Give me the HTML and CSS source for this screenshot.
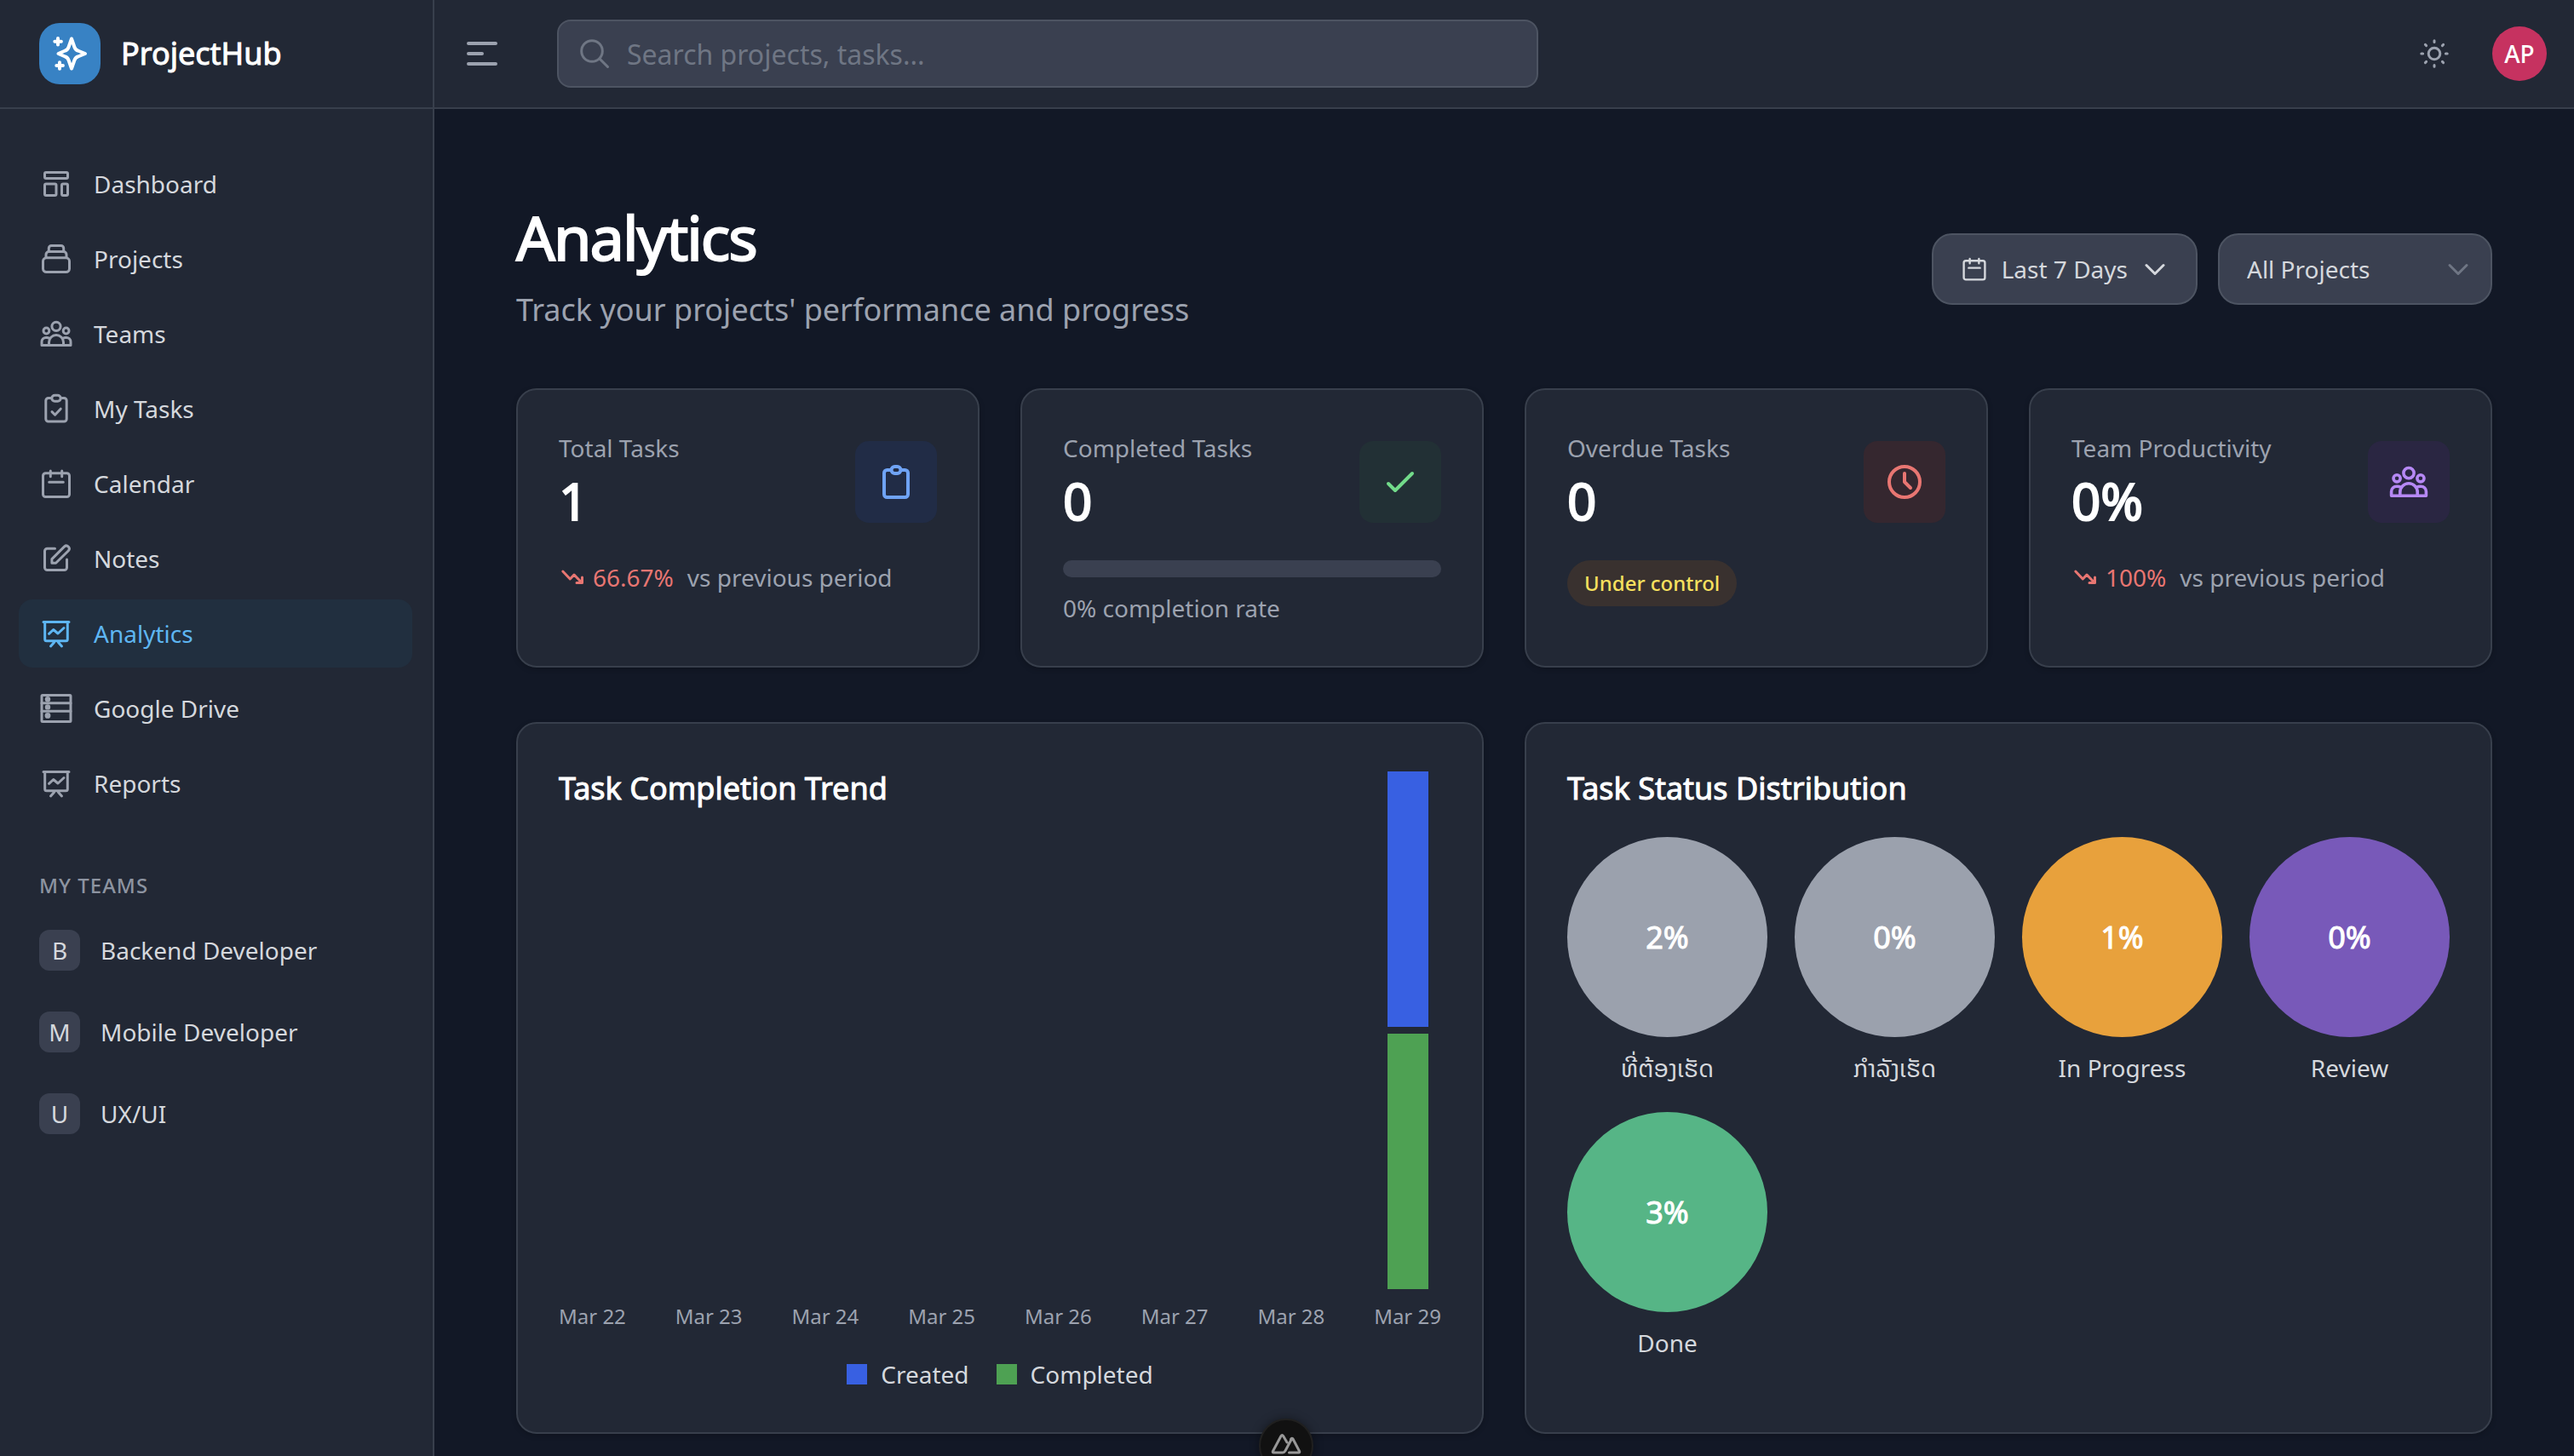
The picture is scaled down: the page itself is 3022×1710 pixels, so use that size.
FILE: index.html
```html
<!DOCTYPE html>
<html lang="en">
<head>
<meta charset="utf-8">
<meta name="viewport" content="width=device-width, initial-scale=1">
<title>ProjectHub - Analytics</title>
<link rel="stylesheet" href="styles.css">
</head>
<body>
<svg class="sprite" aria-hidden="true">
  <symbol id="i-dashboard" viewBox="0 0 40 40"><rect x="6.500" y="6.500" width="27" height="7" rx="1.500"/><rect x="6.500" y="20" width="13.500" height="13.500" rx="1.500"/><rect x="26.500" y="20" width="7" height="13.500" rx="1.500"/></symbol>
  <symbol id="i-projects" viewBox="0 0 40 40"><path d="M11.300 11V7.500a3 3 0 0 1 3-3h11.400a3 3 0 0 1 3 3V11M8 18v-3a3.500 3.500 0 0 1 3.500-3.500h17A3.500 3.500 0 0 1 32 15v3"/><rect x="4.500" y="18.800" width="31" height="16.700" rx="4"/></symbol>
  <symbol id="i-teams" viewBox="0 0 40 40"><circle cx="20" cy="11.300" r="5.100"/><circle cx="8.400" cy="16.500" r="3.400"/><circle cx="31.600" cy="16.500" r="3.400"/><path d="M11.500 33.500V30a8.500 8.500 0 0 1 17 0v3.500M12 25.300a6 6 0 0 0-3-.9H8a5 5 0 0 0-5 5v4.100h34v-4.100a5 5 0 0 0-5-5h-1a6 6 0 0 0-3 .9"/></symbol>
  <symbol id="i-tasks" viewBox="0 0 40 40"><path d="M14 7.500h-3.200a3 3 0 0 0-3 3v21.600a3 3 0 0 0 3 3h18.400a3 3 0 0 0 3-3V10.500a3 3 0 0 0-3-3H26M15 23.600l3.600 3.600 6.600-7"/><rect x="14.800" y="4.300" width="10.400" height="7" rx="3.500"/></symbol>
  <symbol id="i-calendar" viewBox="0 0 40 40"><rect x="4.500" y="7.800" width="31" height="27.700" rx="3"/><path d="M13.300 5v6.700M26.700 5v6.700M11.700 18.300h16.600"/></symbol>
  <symbol id="i-notes" viewBox="0 0 40 40"><path d="M18.500 8.200h-9a3 3 0 0 0-3 3v19.300a3 3 0 0 0 3 3h20a3 3 0 0 0 3-3V21M14.900 25.300v-4.700L29.600 5.900a3.400 3.400 0 0 1 4.800 4.800L19.600 25.300z"/></symbol>
  <symbol id="i-board" viewBox="0 0 40 40"><path d="M5 6.400h30M6.700 6.400v20.300a2 2 0 0 0 2 2h22.600a2 2 0 0 0 2-2V6.400M17.500 30.500L13.500 35M22.500 30.500l4 4.500M11.500 20.300l5.200-4.800 5.300 4.500 7-6.500"/></symbol>
  <symbol id="i-drive" viewBox="0 0 40 40"><rect x="3" y="4.500" width="34" height="31" rx="1"/><path d="M3 13.700h34M3 23.300h34"/><g fill="currentColor" stroke="none"><circle cx="10" cy="9.200" r="3.200"/><circle cx="10" cy="18.400" r="3.200"/><circle cx="10" cy="28.400" r="3.400"/></g></symbol>
  <symbol id="i-trend" viewBox="0 0 32 32"><path d="M4.800 9l8.500 9 4.700-5 9 9.300M27.500 16v6.500H21"/></symbol>
  <symbol id="i-chevron" viewBox="0 0 32 32"><path d="M6 11.500l10 10 10-10"/></symbol>
</svg>

<div class="app">
  <aside class="sidebar">
    <div class="brand">
      <svg class="brand-mark" viewBox="0 0 72 72" aria-hidden="true"><path d="M38 18.500L41.500 28.500Q42.500 31.500 45.500 32.500L54 36L45.500 39.500Q42.500 40.500 41.500 43.500L38 53.500L34.500 43.500Q33.500 40.500 30.500 39.500L22.500 36L30.500 32.500Q33.500 31.500 34.500 28.500ZM22 18v7.600M18.300 21.800h7.600M24 46.200v7.600M20.300 50h7.600"/></svg>
      <span class="brand-name">ProjectHub</span>
    </div>
    <nav class="nav" aria-label="Main">
      <a class="nav-item" href="#"><svg class="icon"><use href="#i-dashboard"/></svg>Dashboard</a>
      <a class="nav-item" href="#"><svg class="icon"><use href="#i-projects"/></svg>Projects</a>
      <a class="nav-item" href="#"><svg class="icon"><use href="#i-teams"/></svg>Teams</a>
      <a class="nav-item" href="#"><svg class="icon"><use href="#i-tasks"/></svg>My Tasks</a>
      <a class="nav-item" href="#"><svg class="icon"><use href="#i-calendar"/></svg>Calendar</a>
      <a class="nav-item" href="#"><svg class="icon"><use href="#i-notes"/></svg>Notes</a>
      <a class="nav-item active" href="#" aria-current="page"><svg class="icon"><use href="#i-board"/></svg>Analytics</a>
      <a class="nav-item" href="#"><svg class="icon"><use href="#i-drive"/></svg>Google Drive</a>
      <a class="nav-item" href="#"><svg class="icon"><use href="#i-board"/></svg>Reports</a>
    </nav>
    <section class="teams">
      <h2 class="teams-title">MY TEAMS</h2>
      <a class="team" href="#"><span class="team-tile">B</span>Backend Developer</a>
      <a class="team" href="#"><span class="team-tile">M</span>Mobile Developer</a>
      <a class="team" href="#"><span class="team-tile">U</span>UX/UI</a>
    </section>
  </aside>

  <div class="page">
    <header class="topbar">
      <button class="icon-button" type="button" aria-label="Toggle menu"><svg class="icon menu-icon" viewBox="0 0 40 40"><path d="M4 8h32M4 20h16M4 32h32"/></svg></button>
      <label class="search">
        <svg class="search-icon" viewBox="0 0 40 40" aria-hidden="true"><circle cx="17" cy="17" r="12.300"/><path d="M26 26l9.500 9.500"/></svg>
        <input type="search" placeholder="Search projects, tasks..." aria-label="Search projects and tasks">
      </label>
      <div class="topbar-actions">
        <button class="icon-button" type="button" aria-label="Toggle theme"><svg class="icon" viewBox="0 0 40 40"><circle cx="20" cy="20" r="6.800"/><path d="M20 4.800v1.800M20 33.400v1.800M4.800 20h1.800M33.400 20h1.800M9.400 9.400l1.200 1.200M29.400 29.400l1.200 1.200M9.400 30.600l1.200-1.200M29.400 10.600l1.200-1.200"/></svg></button>
        <button class="avatar" type="button" aria-label="Account AP">AP</button>
      </div>
    </header>

    <main class="content">
      <div class="page-head">
        <div>
          <h1 class="page-title">Analytics</h1>
          <p class="page-subtitle">Track your projects' performance and progress</p>
        </div>
        <div class="filters">
          <button class="period" type="button"><svg class="icon-sm"><use href="#i-calendar"/></svg>Last 7 Days<svg class="icon-sm"><use href="#i-chevron"/></svg></button>
          <div class="select">
            <select aria-label="Project"><option>All Projects</option></select>
            <svg class="select-arrow" aria-hidden="true"><use href="#i-chevron"/></svg>
          </div>
        </div>
      </div>

      <div class="stats">
        <section class="card">
          <div class="stat-head">
            <div><h2 class="stat-label">Total Tasks</h2><p class="stat-value">1</p></div>
            <span class="stat-icon blue"><svg viewBox="0 0 48 48"><path d="M17 10h-3.500a3.500 3.500 0 0 0-3.500 3.500v25a3.500 3.500 0 0 0 3.500 3.500h21a3.500 3.500 0 0 0 3.500-3.500v-25a3.500 3.500 0 0 0-3.500-3.500H31"/><rect x="18.500" y="6" width="11" height="8" rx="4"/></svg></span>
          </div>
          <p class="trend"><span class="down"><svg class="icon-sm"><use href="#i-trend"/></svg>66.67%</span>vs previous period</p>
        </section>
        <section class="card">
          <div class="stat-head">
            <div><h2 class="stat-label">Completed Tasks</h2><p class="stat-value">0</p></div>
            <span class="stat-icon green"><svg viewBox="0 0 48 48"><path d="M10 26l8 8 20-20"/></svg></span>
          </div>
          <div class="progress" role="progressbar" aria-valuenow="0" aria-valuemin="0" aria-valuemax="100" aria-label="Completion rate"></div>
          <p class="rate">0% completion rate</p>
        </section>
        <section class="card">
          <div class="stat-head">
            <div><h2 class="stat-label">Overdue Tasks</h2><p class="stat-value">0</p></div>
            <span class="stat-icon red"><svg viewBox="0 0 48 48"><circle cx="24" cy="24" r="18"/><path d="M24 14v10l7 7"/></svg></span>
          </div>
          <span class="badge">Under control</span>
        </section>
        <section class="card">
          <div class="stat-head">
            <div><h2 class="stat-label">Team Productivity</h2><p class="stat-value">0%</p></div>
            <span class="stat-icon purple"><svg><use href="#i-teams"/></svg></span>
          </div>
          <p class="trend"><span class="down"><svg class="icon-sm"><use href="#i-trend"/></svg>100%</span>vs previous period</p>
        </section>
      </div>

      <div class="charts">
        <section class="card">
          <h2 class="card-title">Task Completion Trend</h2>
          <div class="bars">
            <div class="day"><span class="day-label">Mar 22</span></div>
            <div class="day"><span class="day-label">Mar 23</span></div>
            <div class="day"><span class="day-label">Mar 24</span></div>
            <div class="day"><span class="day-label">Mar 25</span></div>
            <div class="day"><span class="day-label">Mar 26</span></div>
            <div class="day"><span class="day-label">Mar 27</span></div>
            <div class="day"><span class="day-label">Mar 28</span></div>
            <div class="day"><div class="bar created" style="height:300px"></div><div class="bar completed" style="height:300px"></div><span class="day-label">Mar 29</span></div>
          </div>
          <div class="legend">
            <span class="legend-item"><i class="swatch created"></i>Created</span>
            <span class="legend-item"><i class="swatch completed"></i>Completed</span>
          </div>
        </section>
        <section class="card">
          <h2 class="card-title">Task Status Distribution</h2>
          <div class="statuses">
            <div class="status"><div class="disc gray">2%</div><span lang="lo">ທີ່ຕ້ອງເຮັດ</span></div>
            <div class="status"><div class="disc gray">0%</div><span lang="lo">ກຳລັງເຮັດ</span></div>
            <div class="status"><div class="disc amber">1%</div><span>In Progress</span></div>
            <div class="status"><div class="disc violet">0%</div><span>Review</span></div>
            <div class="status"><div class="disc emerald">3%</div><span>Done</span></div>
          </div>
        </section>
      </div>
    </main>
  </div>
</div>

<button class="devtools" type="button" aria-label="Nuxt DevTools"><svg viewBox="0 0 40 40"><path d="M26.700 11.500L18.800 26.200Q17.900 28 16 28H5.500Q3.500 28 4.500 26.200L14 8.500Q15.300 6.500 16.600 8.500L21 16M23.500 28H34.500Q36.500 28 35.500 26.200L28 12Q26.700 10.300 25.500 12.200"/></svg></button>
</body>
</html>
```
FILE: styles.css
```css
:root {
  --bg: #121826;
  --panel: #222835;
  --field: #3a4050;
  --line: #383f4c;
  --field-line: #4d5462;
  --text: #d5d8dd;
  --muted: #9ca2af;
  --faint: #6f7684;
}

* { box-sizing: border-box; }

body {
  margin: 0;
  background: var(--bg);
  color: var(--text);
  font: 28px/40px "Noto Sans", "Noto Sans Lao", "DejaVu Sans", sans-serif;
}

h1, h2, p { margin: 0; font-weight: 400; }
a { color: inherit; text-decoration: none; }
button, input, select { font: inherit; color: inherit; margin: 0; }
button { cursor: pointer; }

svg {
  display: block;
  flex: none;
  fill: none;
  stroke: currentColor;
  stroke-width: 3;
  stroke-linecap: round;
  stroke-linejoin: round;
}

.sprite { position: absolute; width: 0; height: 0; }
.icon { width: 40px; height: 40px; }
.icon-sm { width: 32px; height: 32px; }

.app { display: flex; min-height: 100vh; }

/* Sidebar */
.sidebar {
  flex: none;
  width: 510px;
  background: var(--panel);
  border-right: 2px solid var(--line);
}

.brand {
  display: flex;
  align-items: center;
  gap: 24px;
  height: 128px;
  padding: 0 46px;
  border-bottom: 2px solid var(--line);
}

.brand-mark {
  width: 72px;
  height: 72px;
  border-radius: 24px;
  background: #3882c4;
  color: #fff;
  stroke-width: 4;
}

.brand-name {
  color: #fff;
  font-size: 36px;
  -webkit-text-stroke: 1px;
}

.nav {
  display: flex;
  flex-direction: column;
  gap: 8px;
  padding: 48px 24px 0 22px;
}

.nav-item {
  display: flex;
  align-items: center;
  gap: 24px;
  height: 80px;
  padding: 0 24px;
  border-radius: 16px;
}

.nav-item .icon { color: var(--muted); }
.nav-item.active { background: #212f3f; color: #5eb6f2; }
.nav-item.active .icon { color: inherit; }

.teams {
  display: flex;
  flex-direction: column;
  gap: 16px;
  padding: 64px 46px;
}

.teams-title {
  color: #8d94a1;
  font-size: 24px;
  line-height: 32px;
  font-weight: 500;
  letter-spacing: 1px;
  margin-bottom: 4px;
}

.team { display: flex; align-items: center; gap: 24px; height: 80px; }

.team-tile {
  display: grid;
  place-items: center;
  width: 48px;
  height: 48px;
  border-radius: 12px;
  background: var(--field);
}

/* Top bar */
.page { flex: 1; min-width: 0; }

.topbar {
  display: flex;
  align-items: center;
  height: 128px;
  padding: 0 32px 0 36px;
  background: var(--panel);
  border-bottom: 2px solid var(--line);
}

.icon-button {
  display: block;
  padding: 0;
  border: 0;
  background: none;
  color: var(--muted);
}

.menu-icon { stroke-width: 4; }

.search {
  position: relative;
  flex: 1;
  max-width: 1152px;
  margin-left: 68px;
}

.search input {
  display: block;
  width: 100%;
  height: 80px;
  padding: 0 32px 0 80px;
  border: 2px solid var(--field-line);
  border-radius: 16px;
  background: var(--field);
  font-size: 32px;
  -webkit-appearance: none;
  appearance: none;
}

.search input::placeholder { color: var(--faint); opacity: 1; }

.search-icon {
  position: absolute;
  left: 24px;
  top: 20px;
  width: 40px;
  height: 40px;
  color: var(--faint);
}

.topbar-actions {
  display: flex;
  align-items: center;
  gap: 48px;
  margin-left: auto;
}

.avatar {
  width: 64px;
  height: 64px;
  padding: 0;
  border: 0;
  border-radius: 50%;
  background: #c63260;
  color: #fff;
  font-weight: 500;
}

/* Page heading and filters */
.content { padding: 112px 96px 24px; }

.page-head {
  display: flex;
  align-items: center;
  justify-content: space-between;
  margin-bottom: 64px;
}

.page-title {
  margin-bottom: 20px;
  color: #fff;
  font-size: 72px;
  line-height: 76px;
  letter-spacing: -2px;
  -webkit-text-stroke: 2px;
}

.page-subtitle { color: var(--muted); font-size: 36px; line-height: 56px; }
.filters { display: flex; gap: 24px; }

.period,
.select select {
  height: 84px;
  padding: 0 32px;
  border: 2px solid var(--field-line);
  border-radius: 24px;
  background: var(--field);
}

.period { display: flex; align-items: center; gap: 16px; }
.select { position: relative; }

.select select {
  display: block;
  width: 322px;
  -webkit-appearance: none;
  appearance: none;
}

.select-arrow {
  position: absolute;
  right: 24px;
  top: 26px;
  width: 32px;
  height: 32px;
  color: var(--faint);
  pointer-events: none;
}

/* Cards */
.card {
  padding: 48px;
  border: 2px solid var(--line);
  border-radius: 24px;
  background: var(--panel);
  box-shadow: 0 2px 6px rgb(0 0 0 / 20%);
}

.stats {
  display: grid;
  grid-template-columns: repeat(4, 1fr);
  gap: 48px;
  margin-bottom: 64px;
}

.stat-head {
  display: flex;
  align-items: center;
  justify-content: space-between;
  margin-bottom: 32px;
}

.stat-label { color: var(--muted); font-size: 28px; }

.stat-value {
  margin: 6px 0 2px;
  color: #fff;
  font-size: 60px;
  line-height: 72px;
  -webkit-text-stroke: 2px;
}

.stat-icon {
  display: grid;
  place-items: center;
  width: 96px;
  height: 96px;
  border-radius: 16px;
}

.stat-icon svg { width: 48px; height: 48px; stroke-width: 4; }
.blue { background: #212c46; color: #6fa3f5; }
.green { background: #223035; color: #72db8a; }
.red { background: #35272f; color: #e87672; }
.purple { background: #2a2642; color: #b688f5; }
.stat-icon.purple svg { stroke-width: 3; }

.trend { display: flex; align-items: center; gap: 16px; color: var(--muted); }
.down { display: flex; align-items: center; gap: 8px; color: #e87672; }

.progress { height: 20px; border-radius: 10px; background: var(--field); }
.rate { margin-top: 16px; color: var(--muted); }

.badge {
  display: block;
  width: fit-content;
  padding: 12px 20px;
  border-radius: 28px;
  background: #39312f;
  color: #f7e05e;
  font-size: 24px;
  line-height: 30px;
  font-weight: 500;
}

.charts { display: grid; grid-template-columns: repeat(2, 1fr); gap: 48px; }

.card-title {
  margin-bottom: 29px;
  color: #fff;
  font-size: 36px;
  line-height: 56px;
  -webkit-text-stroke: 1px;
}

/* The tallest day may rise above the plot into the title row */
.bars {
  display: flex;
  align-items: flex-end;
  justify-content: space-between;
  height: 579px;
}

.day { display: flex; flex-direction: column; align-items: center; gap: 8px; }
.bar { width: 48px; }
.created { background: #3860e2; }
.completed { background: #4ea153; }
.day-label { margin-top: 8px; color: var(--muted); font-size: 24px; line-height: 32px; }

.legend { display: flex; justify-content: center; gap: 32px; margin-top: 32px; }
.legend-item { display: flex; align-items: center; gap: 16px; }
.swatch { width: 24px; height: 24px; }

.statuses { display: grid; grid-template-columns: repeat(4, 1fr); gap: 32px; }

.status {
  display: flex;
  flex-direction: column;
  align-items: center;
  gap: 16px;
}

.disc {
  display: grid;
  place-items: center;
  width: 100%;
  aspect-ratio: 1;
  border-radius: 50%;
  color: #fff;
  font-size: 36px;
  -webkit-text-stroke: 1px;
}

.gray { background: #9ba1ad; }
.amber { background: #e8a13c; }
.violet { background: #7859b9; }
.emerald { background: #56b586; }

.devtools {
  position: fixed;
  left: 50%;
  bottom: -20px;
  display: grid;
  place-items: center;
  width: 64px;
  height: 64px;
  margin-left: -33px;
  padding: 0;
  border: 2px solid #202020;
  border-radius: 50%;
  background: #111;
  color: #989898;
  box-shadow: 0 0 12px rgb(0 0 0 / 40%);
}

.devtools svg { width: 40px; height: 40px; }
```
